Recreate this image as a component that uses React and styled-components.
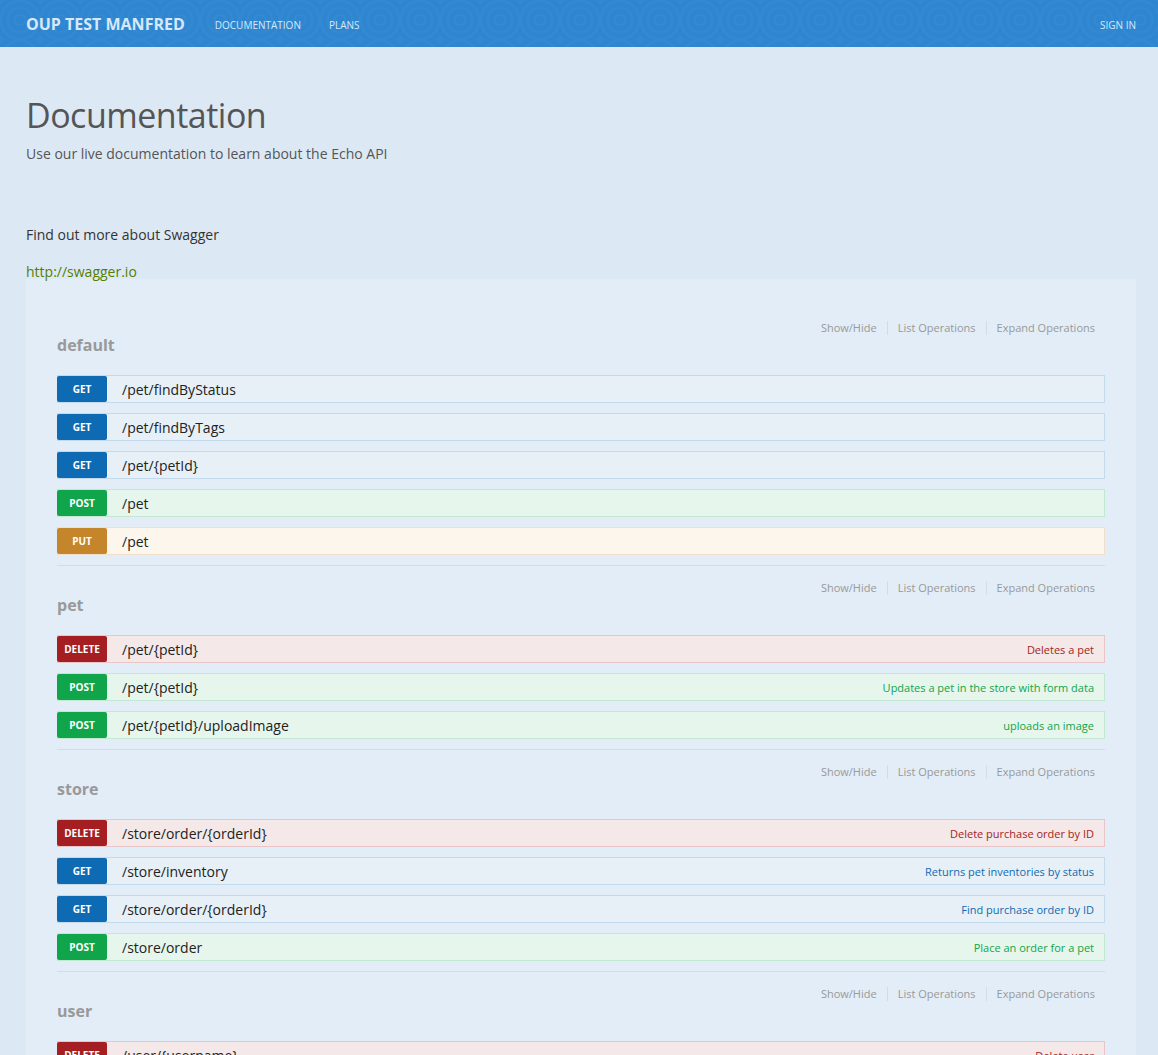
import styled, { createGlobalStyle } from 'styled-components';

const GlobalStyle = createGlobalStyle`
  * {
    box-sizing: border-box;
  }

  body {
    margin: 0;
    background: #dce9f5;
    font-family: 'Open Sans', 'DejaVu Sans', sans-serif;
    color: #333;
  }
`;

const METHODS = {
  get: { badge: '#0f6ab4', bg: '#e7f0f7', border: '#c3d9ec', text: '#0f6ab4' },
  post: { badge: '#10a54a', bg: '#e7f6ec', border: '#c3e8d1', text: '#10a54a' },
  put: { badge: '#c5862b', bg: '#fcf6ed', border: '#f0e0ca', text: '#c5862b' },
  delete: { badge: '#a41e22', bg: '#f5e8e8', border: '#e8c6c7', text: '#a41e22' },
};

const sections = [
  {
    name: 'default',
    ops: [
      ['get', '/pet/findByStatus', ''],
      ['get', '/pet/findByTags', ''],
      ['get', '/pet/{petId}', ''],
      ['post', '/pet', ''],
      ['put', '/pet', ''],
    ],
  },
  {
    name: 'pet',
    ops: [
      ['delete', '/pet/{petId}', 'Deletes a pet'],
      ['post', '/pet/{petId}', 'Updates a pet in the store with form data'],
      ['post', '/pet/{petId}/uploadImage', 'uploads an image'],
    ],
  },
  {
    name: 'store',
    ops: [
      ['delete', '/store/order/{orderId}', 'Delete purchase order by ID'],
      ['get', '/store/inventory', 'Returns pet inventories by status'],
      ['get', '/store/order/{orderId}', 'Find purchase order by ID'],
      ['post', '/store/order', 'Place an order for a pet'],
    ],
  },
  {
    name: 'user',
    ops: [
      ['delete', '/user/{username}', 'Delete user'],
      ['get', '/user/{username}', 'Get user by user name'],
    ],
  },
];

const Page = styled.div`
  height: 1055px;
  overflow: hidden;
`;

const TopBar = styled.header`
  height: 47px;
  display: flex;
  align-items: center;
  padding: 0 22px 0 26px;
  background-color: #2f86d0;
  background-image: repeating-radial-gradient(circle at 20px 20px, rgba(255,255,255,0) 0, rgba(255,255,255,0) 4px, rgba(255,255,255,0.035) 5px, rgba(255,255,255,0) 7px);
  background-size: 40px 40px;
`;

const Brand = styled.div`
  font-size: 16px;
  font-weight: 700;
  color: #d7e8f7;
  margin-right: 30px;
`;

const NavLink = styled.a`
  font-size: 10px;
  color: #d7e8f7;
  text-transform: uppercase;
  margin-right: ${p => (p.last ? '0' : '28px')};
  margin-left: ${p => (p.right ? 'auto' : '0')};
  padding-top: 3px;
`;

const Content = styled.main`
  padding: 48px 22px 0 26px;
`;

const Title = styled.h1`
  margin: 0;
  font-size: 34px;
  font-weight: 400;
  color: #555;
  line-height: 40px;
  letter-spacing: -0.5px;
`;

const Lead = styled.p`
  margin: 9px 0 0;
  font-size: 14px;
  color: #555;
`;

const Info = styled.p`
  margin: ${p => p.top || '0'} 0 0;
  font-size: 14px;
  color: ${p => p.color || '#333'};
  line-height: ${p => p.lh || '20px'};
`;

const Panel = styled.div`
  padding: 27px 31px 0;
  background: #e2edf7;
  min-height: 900px;
`;

const Section = styled.section`
  padding-top: 15px;
  border-top: 1px solid #d5dbe1;
  &:first-child {
    border-top: none;
  }
`;

const Toolbar = styled.ul`
  list-style: none;
  margin: 0;
  padding: 0;
  display: flex;
  justify-content: flex-end;
  line-height: 14px;
`;

const ToolItem = styled.li`
  font-size: 11px;
  color: #999;
  padding: 0 10px;
  border-left: ${p => (p.first ? 'none' : '1px solid #d5dbe1')};
`;

const Heading = styled.h2`
  margin: 0 0 20px;
  font-size: 16px;
  font-weight: 700;
  color: #999;
  line-height: 20px;
`;

const Row = styled.div`
  display: flex;
  align-items: center;
  height: 28px;
  margin-bottom: 10px;
  background: ${p => METHODS[p.method].bg};
  border: 1px solid ${p => METHODS[p.method].border};
`;

const Badge = styled.span`
  width: 50px;
  height: 26px;
  margin-left: -1px;
  border-radius: 2px;
  background: ${p => METHODS[p.method].badge};
  color: #fff;
  font-size: 10px;
  font-weight: 700;
  display: flex;
  align-items: center;
  justify-content: center;
  flex-shrink: 0;
`;

const Path = styled.span`
  margin-left: 15px;
  font-size: 14px;
  color: #222;
  flex: 1;
`;

const Summary = styled.span`
  margin-right: 10px;
  font-size: 11px;
  color: ${p => METHODS[p.method].text};
`;

export default function App() {
  return (
    <>
      <GlobalStyle />
      <Page>
        <TopBar>
          <Brand>OUP TEST MANFRED</Brand>
          <NavLink>Documentation</NavLink>
          <NavLink>Plans</NavLink>
          <NavLink right last>Sign in</NavLink>
        </TopBar>
        <Content>
          <Title>Documentation</Title>
          <Lead>Use our live documentation to learn about the Echo API</Lead>
          <Info top="62px">Find out more about Swagger</Info>
          <Info top="20px" lh="14px" color="#547f00">http://swagger.io</Info>
          <Panel>
            {sections.map(s => (
              <Section key={s.name}>
                <Toolbar>
                  <ToolItem first>Show/Hide</ToolItem>
                  <ToolItem>List Operations</ToolItem>
                  <ToolItem>Expand Operations</ToolItem>
                </Toolbar>
                <Heading>{s.name}</Heading>
                {s.ops.map(([method, path, summary], j) => (
                  <Row key={j} method={method}>
                    <Badge method={method}>{method.toUpperCase()}</Badge>
                    <Path>{path}</Path>
                    {summary && <Summary method={method}>{summary}</Summary>}
                  </Row>
                ))}
              </Section>
            ))}
          </Panel>
        </Content>
      </Page>
    </>
  );
}
